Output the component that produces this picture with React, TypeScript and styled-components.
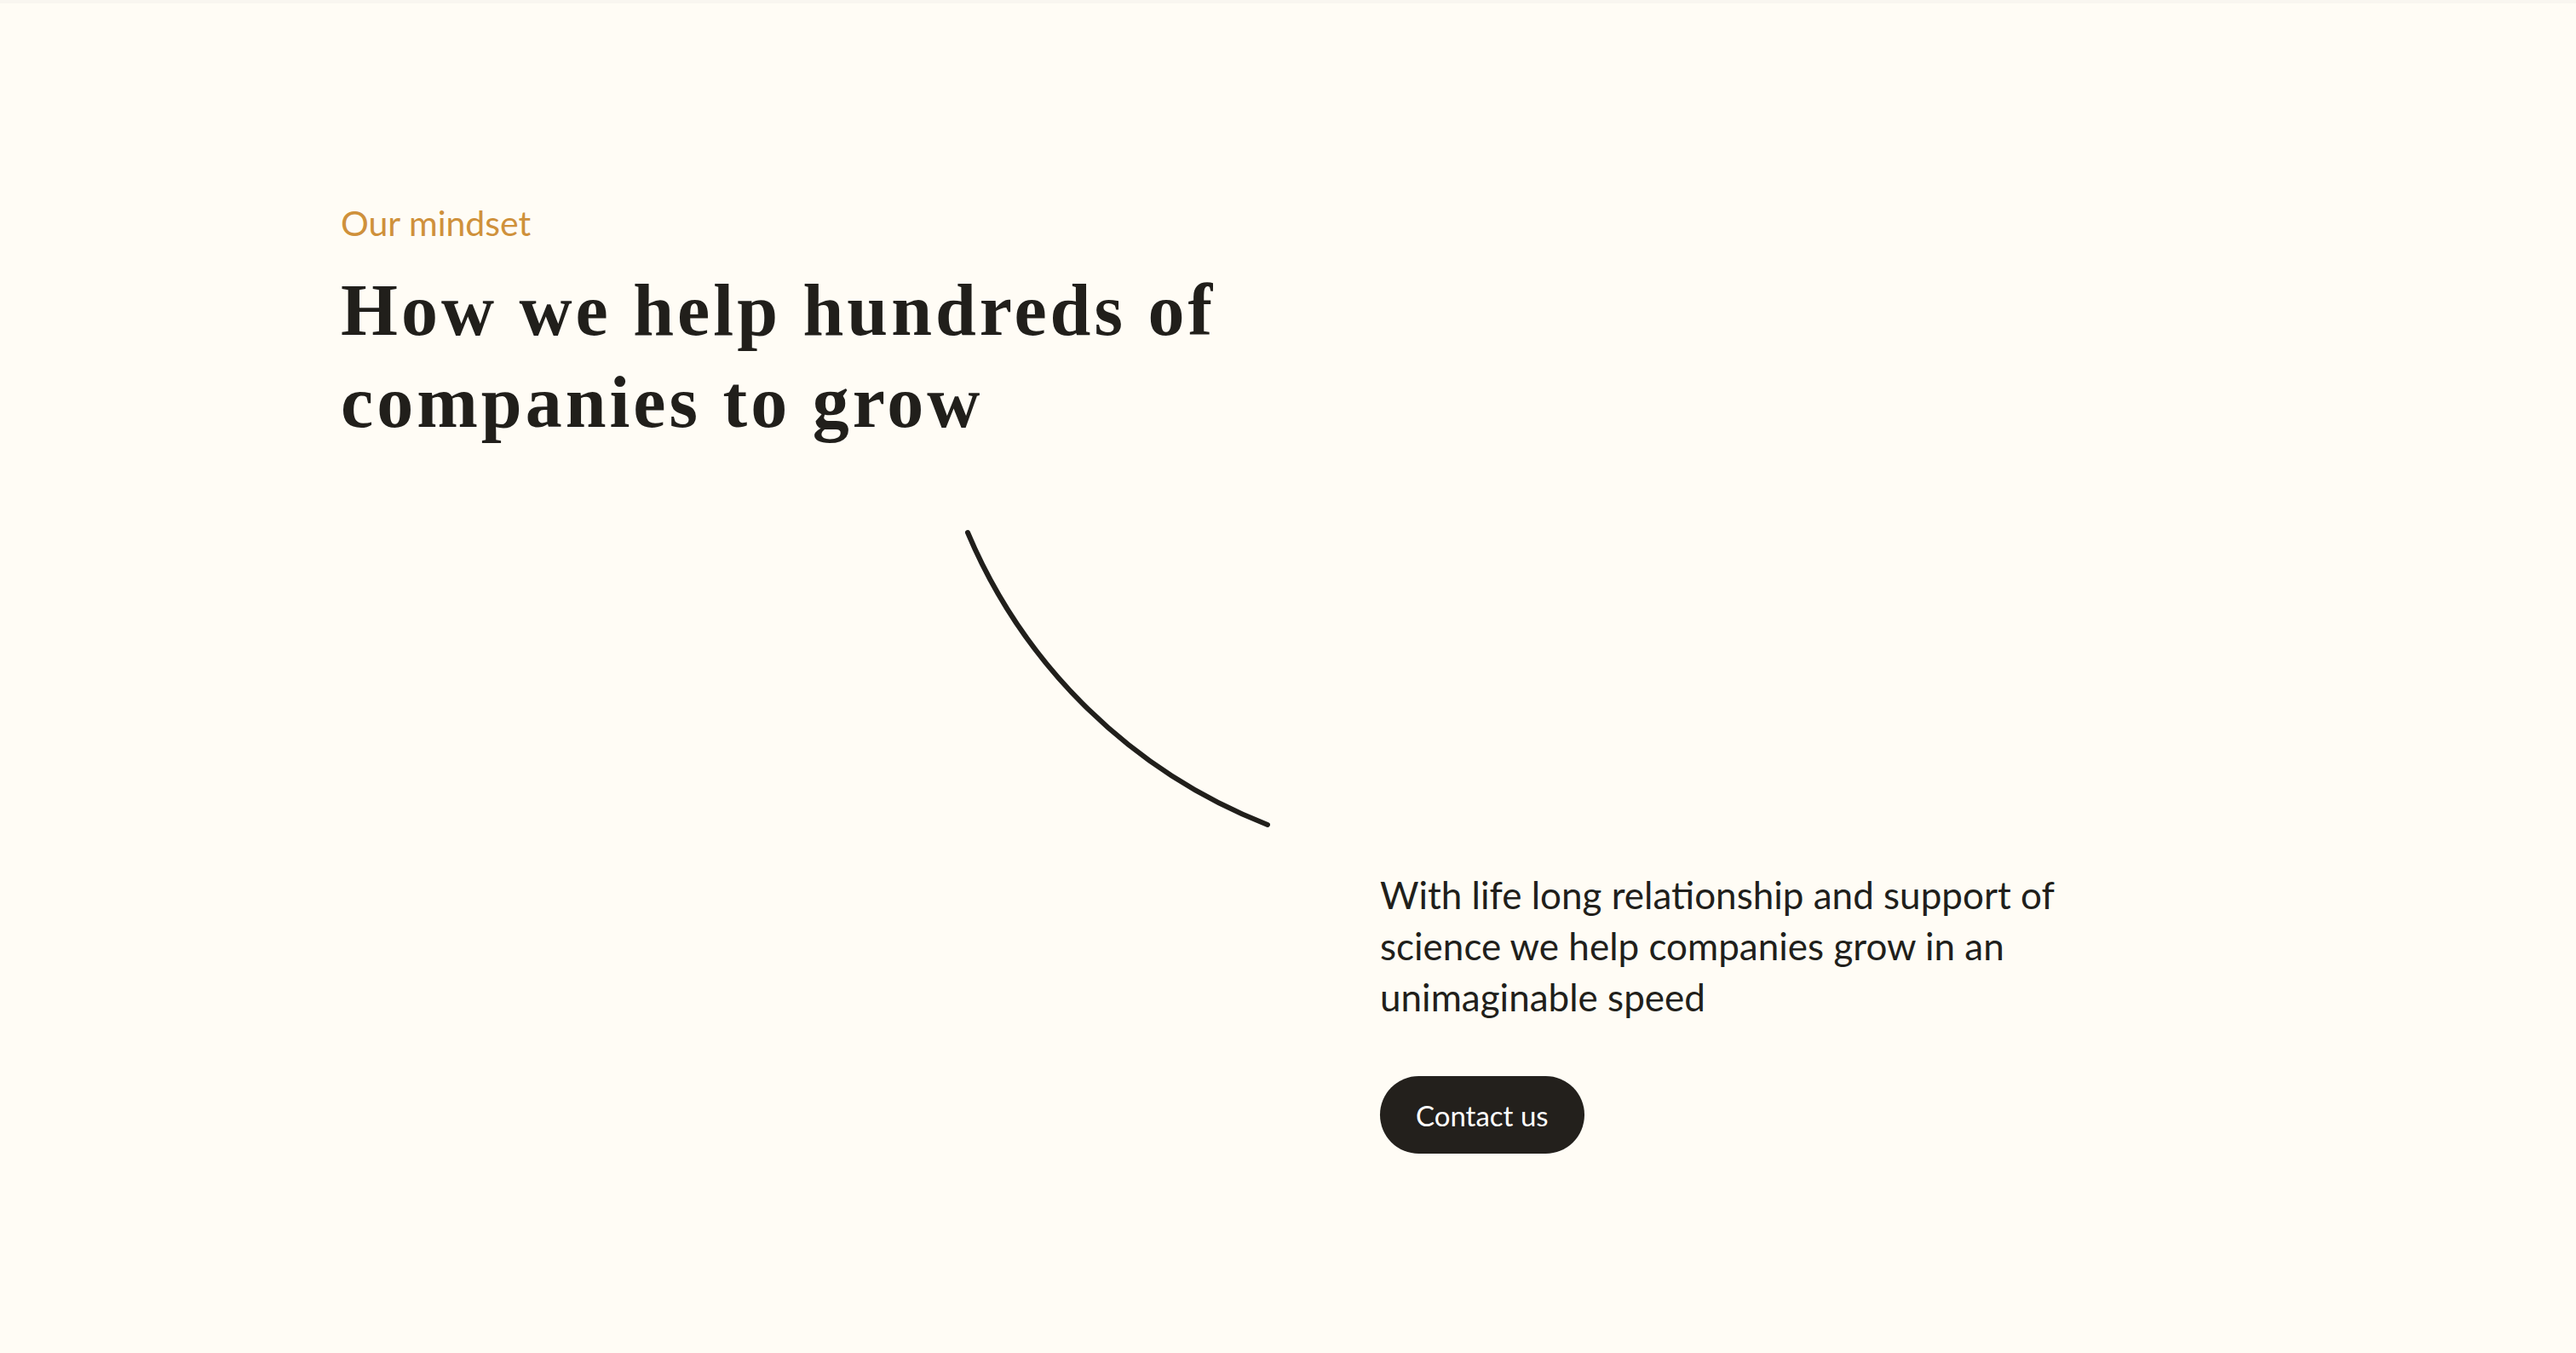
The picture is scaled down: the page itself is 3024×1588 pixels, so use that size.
import styled, { createGlobalStyle } from "styled-components";

const GlobalStyle = createGlobalStyle`
  html, body {
    margin: 0;
    padding: 0;
    background: #fffcf5;
  }
  * {
    box-sizing: border-box;
  }
`;

const Page = styled.main`
  min-height: 1588px;
  background: #fffcf5;
  border-top: 4px solid #f9f6f0;
  padding: 233px 0 0 400px;
  font-family: Lato, "Open Sans", sans-serif;
  color: #211f1b;
`;

const Eyebrow = styled.p`
  margin: 0;
  font-size: 41px;
  line-height: 50px;
  font-weight: 400;
  color: #cf913b;
`;

const Heading = styled.h1`
  margin: 23px 0 0;
  max-width: 1200px;
  font-family: "Liberation Serif", "Times New Roman", serif;
  font-size: 86px;
  line-height: 108px;
  font-weight: 700;
  letter-spacing: 4px;
  color: #211f1b;
`;

const Body = styled.section`
  display: flex;
  align-items: flex-start;
  margin-top: 84px;
  padding-left: 720px;
`;

const Curve = styled.svg`
  flex: none;
  width: 380px;
  height: 370px;
`;

const Content = styled.div`
  margin: 410px 0 0 120px;
  width: 820px;
`;

const Lead = styled.p`
  margin: 0;
  font-size: 44px;
  line-height: 60px;
  color: #211f1b;
`;

const ContactButton = styled.button`
  display: inline-flex;
  align-items: center;
  justify-content: center;
  margin-top: 63px;
  height: 91px;
  padding: 0 42px;
  border: none;
  border-radius: 46px;
  background: #23201c;
  color: #ffffff;
  font-family: inherit;
  font-size: 33px;
  cursor: pointer;
`;

export default function App() {
  return (
    <>
      <GlobalStyle />
      <Page>
        <Eyebrow>Our mindset</Eyebrow>
        <Heading>
          How we help hundreds of
          <br />
          companies to grow
        </Heading>
        <Body>
          <Curve viewBox="0 0 380 370">
            <path
              d="M16 15 A631 631 0 0 0 368 358"
              fill="none"
              stroke="#211f1b"
              strokeWidth="6"
              strokeLinecap="round"
            />
          </Curve>
          <Content>
            <Lead>
              With life long relationship and support of science we help
              companies grow in an unimaginable speed
            </Lead>
            <ContactButton>Contact us</ContactButton>
          </Content>
        </Body>
      </Page>
    </>
  );
}
